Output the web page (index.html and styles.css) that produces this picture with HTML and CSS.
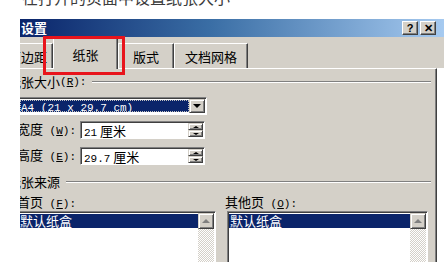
FILE: index.html
```html
<!DOCTYPE html>
<html>
  <head>
    <meta charset='utf-8'/>
    <link rel="stylesheet" href="styles.css">
  </head>
  <body>
    <div class='caption'><span>在打开的页面中设置纸张大小</span></div>

    <div class='dialog'>
      <div class='titlebar'>
        <span class='title'>设置</span>
        <span class='tbtn'>?</span>
        <span class='tbtn'>&#x2715;</span>
      </div>

      <div class='sheet'>
        <div class='tabs'>
          <span class='tab first'>页边距</span>
          <span class='tab active'>纸张</span>
          <span class='tab w56'>版式</span>
          <span class='tab w74'>文档网格</span>
        </div>

        <div class='pane'>
          <div class='legend'>纸张大小<span class='mono'> (<u>R</u>):</span><i></i></div>

          <div class='combo'>
            <div class='combo-value'><span class='mono'>A4 (21 x 29.7 cm)</span></div>
            <span class='drop'><b></b></span>
          </div>

          <div class='field'>
            <label>宽度<span class='mono'> (<u>W</u>):</span></label>
            <div class='spin'>
              <div class='spin-value'><span class='mono'>21</span> 厘米</div>
              <div class='spin-btns'><span><b class='up'></b></span><span><b class='down'></b></span></div>
            </div>
          </div>

          <div class='field'>
            <label>高度<span class='mono'> (<u>E</u>):</span></label>
            <div class='spin'>
              <div class='spin-value'><span class='mono'>29.7</span> 厘米</div>
              <div class='spin-btns'><span><b class='up'></b></span><span><b class='down'></b></span></div>
            </div>
          </div>

          <div class='legend source'>纸张来源<i></i></div>

          <div class='trays'>
            <div>
              <div class='tray-label'>首页<span class='mono'> (<u>F</u>):</span></div>
              <div class='list'>
                <div class='items'><div class='item'>默认纸盒</div></div>
                <div class='vscroll'><span class='arrow'><b class='up'></b></span></div>
              </div>
            </div>
            <div>
              <div class='tray-label other'>其他页<span class='mono'> (<u>O</u>):</span></div>
              <div class='list'>
                <div class='items'><div class='item'>默认纸盒</div></div>
                <div class='vscroll'><span class='arrow'><b class='up'></b></span></div>
              </div>
            </div>
          </div>
        </div>
      </div>
    </div>

    <div class='mark'></div>
  </body>
</html>
```

FILE: styles.css
```css
* {
  box-sizing: border-box;
}

body {
  margin: 0;
  background: #fff;
  font-family: 'Noto Sans CJK SC', sans-serif;
  font-size: 13px;
  line-height: 14px;
  color: #000;
}

.mono {
  font-family: 'Liberation Mono', monospace;
  font-size: 11px;
}

.caption {
  height: 19px;
  overflow: hidden;
  padding-left: 22px;
  font-size: 16px;
  line-height: 16px;
  color: #3c3c3c;
}

.caption span {
  display: block;
  margin-top: -11px;
}

.dialog {
  margin-left: 20px;
  height: 243px;
  overflow: hidden;
}

.titlebar {
  display: flex;
  align-items: center;
  height: 18px;
  padding: 0 8px 0 1px;
  background: linear-gradient(to right, #0a246a, #3a6ea5 45%, #a6caf0);
}

.title {
  flex: 1;
  color: #fff;
  font-weight: bold;
  font-size: 13px;
}

.tbtn {
  width: 16px;
  height: 14px;
  margin-left: 2px;
  background: #d4d0c8;
  border: 1px solid;
  border-color: #fff #404040 #404040 #fff;
  box-shadow: inset -1px -1px #808080;
  font: bold 11px/12px 'Liberation Sans', sans-serif;
  text-align: center;
}

.sheet {
  margin-left: -12px;
}

.tabs {
  display: flex;
  align-items: flex-end;
  height: 31px;
  background: #d4d0c8;
}

.tab {
  height: 25px;
  padding-top: 6px;
  border-top: 1px solid #fff;
  border-left: 1px solid #fff;
  border-right: 1px solid #404040;
  box-shadow: inset -1px 0 #808080;
  text-align: center;
}

.tab.first {
  width: 45px;
  border-left: none;
  text-align: left;
}

.tab.active {
  position: relative;
  width: 65px;
  height: 31px;
  margin-bottom: -1px;
  padding-top: 9px;
  background: #d4d0c8;
}

.w56 {
  width: 56px;
}

.w74 {
  width: 74px;
}

.pane {
  height: 200px;
  margin-right: 7px;
  background: #d4d0c8;
  border-top: 1px solid #fff;
  border-right: 1px solid #404040;
  box-shadow: inset -1px 0 #808080;
}

.legend {
  display: flex;
  align-items: center;
  margin: 6px 5px 0 0;
}

.legend i {
  flex: 1;
  height: 2px;
  margin-left: 6px;
  border-top: 1px solid #808080;
  border-bottom: 1px solid #fff;
}

.combo {
  display: flex;
  width: 190px;
  height: 18px;
  margin: 8px 0 0 9px;
  padding: 1px;
  background: #fff;
  border: 1px solid;
  border-color: #808080 #fff #fff #808080;
  box-shadow: inset 1px 1px #404040;
}

.combo-value {
  flex: 1;
  margin: 1px 0 1px 1px;
  padding-left: 1px;
  background: #0a246a;
  color: #fff;
  line-height: 12px;
  outline: 1px dotted #c0c0c0;
  outline-offset: -1px;
}

.drop,
.spin-btns span,
.arrow {
  display: flex;
  align-items: center;
  justify-content: center;
  background: #d4d0c8;
  border: 1px solid;
  border-color: #d4d0c8 #404040 #404040 #d4d0c8;
  box-shadow: inset 1px 1px #fff, inset -1px -1px #808080;
}

.drop {
  width: 16px;
  height: 14px;
}

.drop b {
  border-top: 4px solid #000;
  border-left: 4px solid transparent;
  border-right: 4px solid transparent;
}

.field {
  display: flex;
  align-items: center;
  margin: 6px 0 0 9px;
}

.field + .field {
  margin-top: 8px;
}

.field label {
  width: 63px;
}

.spin {
  display: flex;
  width: 125px;
  height: 18px;
  padding: 1px;
  background: #fff;
  border: 1px solid;
  border-color: #808080 #fff #fff #808080;
  box-shadow: inset 1px 1px #404040;
}

.spin-value {
  flex: 1;
  padding: 1px 0 0 2px;
  line-height: 13px;
}

.spin-btns {
  display: flex;
  flex-direction: column;
  width: 15px;
}

.spin-btns span {
  height: 7px;
}

b.up,
b.down {
  border-left: 3px solid transparent;
  border-right: 3px solid transparent;
}

b.up {
  border-bottom: 2px solid #000;
}

b.down {
  border-top: 2px solid #000;
}

.source {
  margin-top: 10px;
}

.trays {
  display: grid;
  grid-template-columns: 199px 201px;
  column-gap: 11px;
  margin: 6px 0 0 9px;
}

.tray-label {
  height: 16px;
}

.tray-label.other {
  margin-left: -2px;
}

.list {
  display: flex;
  height: 60px;
  padding: 1px;
  background: #fff;
  border: 1px solid;
  border-color: #808080 #fff #fff #808080;
  box-shadow: inset 1px 1px #404040;
}

.items {
  flex: 1;
  padding-top: 1px;
}

.item {
  background: #0a246a;
  color: #fff;
  height: 14px;
  line-height: 13px;
  padding-left: 1px;
}

.vscroll {
  width: 16px;
  background: repeating-conic-gradient(#fff 0 25%, #d4d0c8 0 50%) 0 0 / 2px 2px;
}

.arrow {
  height: 16px;
}

.arrow b.up {
  border-left-width: 4px;
  border-right-width: 4px;
  border-bottom-width: 4px;
  border-bottom-color: #808080;
}

.mark {
  position: absolute;
  left: 43px;
  top: 36px;
  width: 82px;
  height: 39px;
  border: 3px solid #e8141c;
}
```
